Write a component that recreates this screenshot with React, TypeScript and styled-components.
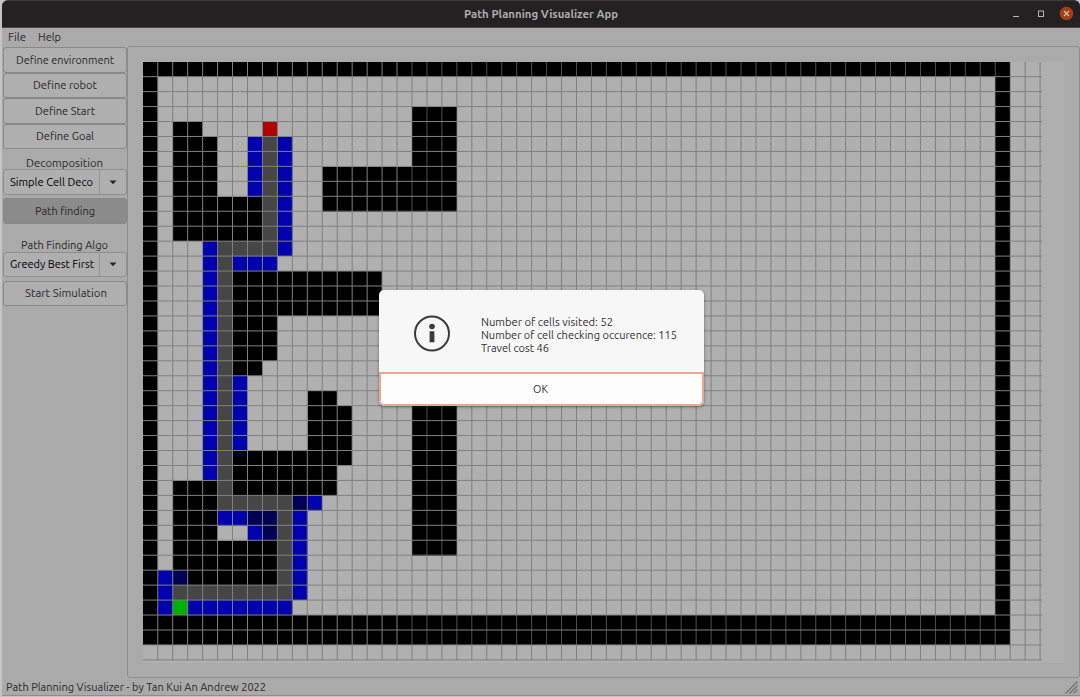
import React, { useLayoutEffect, useRef, useState } from "react";
import styled, { createGlobalStyle } from "styled-components";

const GlobalStyle = createGlobalStyle`
  * { box-sizing: border-box; }
  body { margin: 0; background: #c9c9c9; overflow: hidden; }
`;

const font = `Ubuntu, "Noto Sans", "Open Sans", sans-serif`;

const Window = styled.div`
  position: relative;
  width: 1080px;
  height: 697px;
  display: flex;
  flex-direction: column;
  padding: 0 0 1px 2px;
  background: #c4c4c4;
  font-family: ${font};
  font-size: 11px;
  color: #282828;
`;

const TitleBar = styled.header`
  flex: none;
  height: 28px;
  display: grid;
  grid-template-columns: 1fr auto 1fr;
  align-items: center;
  background: #242122;
  border-top: 1px solid #393738;
  border-bottom: 1px solid #474546;
  border-radius: 6px 6px 0 0;
`;

const Title = styled.h1`
  grid-column: 2;
  display: flex;
  margin: 0;
  font-size: 11px;
  font-weight: 700;
  color: #adabab;
`;

const Controls = styled.div`
  justify-self: end;
  display: flex;
  padding-right: 4px;
`;

const Body = styled.div`
  flex: 1;
  min-height: 0;
  display: flex;
  flex-direction: column;
  background: #aaaaaa;
`;

const MenuBar = styled.nav`
  flex: none;
  height: 18px;
  display: flex;
  gap: 12px;
  padding: 2px 6px 0;
`;

const Main = styled.main`
  height: 633px;
  display: flex;
`;

const Sidebar = styled.aside`
  flex: none;
  width: 125px;
  display: flex;
  flex-direction: column;
  padding: 1px 0 0 1px;
`;

const Button = styled.button<{ $pressed?: boolean; $top?: number }>`
  flex: none;
  width: 124px;
  height: 25.5px;
  display: flex;
  align-items: center;
  justify-content: center;
  margin: ${(p) => p.$top ?? 0}px 0 0;
  padding: 0.9px 1px 0 0;
  border: 1px solid #898989;
  border-radius: 3px;
  background: ${(p) => (p.$pressed ? "#8b8b8b" : "#afafaf")};
  font: 11px ${font};
  color: #282828;
`;

const Label = styled.div<{ $top: number }>`
  height: 14px;
  display: flex;
  justify-content: center;
  align-items: center;
  margin: ${(p) => p.$top}px 1px 0 0;
  padding-top: 2px;
`;

const Combo = styled.div`
  flex: none;
  width: 124px;
  height: 25.5px;
  display: flex;
  border: 1px solid #8e8e8e;
  border-radius: 3px;
  background: #afafaf;
  color: #000;
`;

const ComboText = styled.div`
  flex: 1;
  min-width: 0;
  display: flex;
  align-items: center;
  margin: 0 5px 0 6px;
  padding-top: 0.5px;
  overflow: hidden;
`;

const ComboArrow = styled.div`
  width: 27px;
  display: grid;
  place-items: center;
  padding-top: 1px;
  border-left: 1px solid #949494;
`;

const Frame = styled.section`
  flex: 1;
  padding: 15px 0 0 15px;
  border: 1px solid #8d8d8d;
  border-radius: 3px;
`;

const StatusBar = styled.footer`
  flex: 1;
  display: flex;
  justify-content: space-between;
  padding: 2px 1px 0 4px;
  border-bottom: 1px solid #8d8d8d;
`;

const Dialog = styled.div`
  position: absolute;
  left: 379px;
  top: 290px;
  width: 324.5px;
  height: 116px;
  display: flex;
  flex-direction: column;
  border-radius: 5px;
  background: #f7f7f7;
  box-shadow: 0 1px 3px rgba(0, 0, 0, 0.45);
  overflow: hidden;
`;

const Message = styled.div`
  flex: 1;
  display: flex;
  padding-left: 34px;
  gap: 30px;
`;

const Lines = styled.div`
  display: flex;
  flex-direction: column;
  padding-top: 26px;
  color: #303030;
`;

const Line = styled.div`
  height: 12.8px;
  display: flex;
  align-items: center;
`;

const OkButton = styled.button`
  flex: none;
  height: 34px;
  display: flex;
  align-items: center;
  justify-content: center;
  padding: 1px 1px 0 0;
  border: 2px solid #eba792;
  border-radius: 0 0 5px 5px;
  background: #fdfdfd;
  font: 11px ${font};
  color: #303030;
`;

const Fit = styled.span<{ $w: number }>`
  flex: none;
  display: block;
  width: ${(p) => p.$w}px;
  height: 15px;
  line-height: 15px;
  white-space: nowrap;
`;

const Inner = styled.span`
  display: inline-block;
  transform-origin: 0 50%;
`;

/* Condenses or widens a label so that it fills its given width. */
const Text = ({ w, children }: { w: number; children: string }) => {
  const ref = useRef<HTMLSpanElement>(null);
  const [scale, setScale] = useState(1);
  useLayoutEffect(() => {
    if (!ref.current) return;
    const natural = parseFloat(getComputedStyle(ref.current).width);
    if (natural) setScale(w / natural);
  }, [w, children]);
  return (
    <Fit $w={w}>
      <Inner ref={ref} style={{ transform: `scaleX(${scale})` }}>{children}</Inner>
    </Fit>
  );
};

type Block = [col: number, row: number, cols: number, rows: number];
const PITCH = 14.955;
const BLACK: Block[] = [
  [0, 0, 58, 1], [0, 0, 1, 39], [57, 0, 1, 39], [0, 37, 58, 2],
  [2, 4, 2, 1], [2, 5, 3, 4], [2, 9, 6, 3],
  [18, 3, 3, 4], [12, 7, 9, 3],
  [6, 14, 10, 3], [6, 17, 3, 3], [6, 20, 2, 1],
  [11, 22, 2, 1], [11, 23, 3, 3], [6, 26, 8, 1], [6, 27, 7, 2],
  [2, 28, 3, 6], [5, 32, 4, 3], [3, 34, 2, 1], [18, 22, 3, 11],
];
const BLUE: Block[] = [
  [7, 5, 1, 4], [9, 5, 1, 8], [4, 12, 1, 16], [6, 13, 3, 1], [6, 21, 1, 5],
  [11, 29, 1, 1], [5, 30, 2, 1], [7, 31, 1, 1], [10, 30, 1, 6],
  [1, 34, 1, 3], [3, 36, 7, 1],
];
const NAVY: Block[] = [[10, 29, 1, 1], [7, 30, 2, 1], [8, 31, 1, 1], [2, 34, 1, 1]];
const PATH: Block[] = [
  [8, 5, 1, 8], [5, 12, 3, 1], [5, 13, 1, 17], [6, 29, 4, 1], [9, 30, 1, 6], [2, 35, 7, 1],
];

const Cells = ({ blocks, fill }: { blocks: Block[]; fill: string }) => (
  <g fill={fill} shapeRendering="crispEdges">
    {blocks.map(([c, r, w, h]) => (
      <rect key={`${c}-${r}-${w}`} x={c * PITCH} y={r * PITCH} width={w * PITCH} height={h * PITCH} />
    ))}
  </g>
);

const range = (n: number) => Array.from({ length: n }, (_, i) => i + 1);

const GridMap = () => (
  <svg width="921" height="601" style={{ display: "block", background: "#b0b0b0" }}>
    <Cells blocks={BLACK} fill="#000" />
    <Cells blocks={BLUE} fill="#0000ae" />
    <Cells blocks={NAVY} fill="#000054" />
    <Cells blocks={PATH} fill="#464646" />
    <Cells blocks={[[8, 4, 1, 1]]} fill="#b00000" />
    <Cells blocks={[[2, 36, 1, 1]]} fill="#00b000" />
    <g strokeWidth="1">
      {range(60).map((i) => (
        <line
          key={`v${i}`}
          x1={i * PITCH - 0.2}
          x2={i * PITCH - 0.2}
          y1="0"
          y2="598.5"
          stroke={i < 18 ? "#808080" : "rgba(110, 110, 110, 0.72)"}
        />
      ))}
      {range(40).map((i) => (
        <line key={`h${i}`} y1={i * PITCH - 0.3} y2={i * PITCH - 0.3} x1="0" x2="899" stroke="#808080" />
      ))}
    </g>
  </svg>
);

const Arrow = () => (
  <svg width="8" height="5" viewBox="0 0 8 5"><path d="M0.5 0.5H7.5L4 4.3Z" fill="#262626" /></svg>
);

export default function App() {
  return (
    <>
      <GlobalStyle />
      <Window>
        <TitleBar>
          <Title><Text w={154}>Path Planning Visualizer App</Text></Title>
          <Controls>
            <svg width="66" height="16" viewBox="0 0 66 16" fill="none">
              <path d="M3 10.5h6" stroke="#b5b3b3" />
              <rect x="28.5" y="5" width="5" height="5.5" stroke="#b5b3b3" />
              <circle cx="56.5" cy="7.5" r="6.8" fill="#a83c16" />
              <path d="M54 5l5 5M59 5l-5 5" stroke="#d5c2ba" strokeWidth="1.1" />
            </svg>
          </Controls>
        </TitleBar>
        <Body>
          <MenuBar>
            <Text w={18}>File</Text>
            <Text w={23}>Help</Text>
          </MenuBar>
          <Main>
            <Sidebar>
              <Button><Text w={98}>Define environment</Text></Button>
              <Button><Text w={64}>Define robot</Text></Button>
              <Button><Text w={60}>Define Start</Text></Button>
              <Button><Text w={58}>Define Goal</Text></Button>
              <Label $top={6}><Text w={77}>Decomposition</Text></Label>
              <Combo>
                <ComboText><Text w={83}>Simple Cell Deco</Text></ComboText>
                <ComboArrow><Arrow /></ComboArrow>
              </Combo>
              <Button $pressed $top={3.5}><Text w={60}>Path finding</Text></Button>
              <Label $top={14}><Text w={87}>Path Finding Algo</Text></Label>
              <Combo>
                <ComboText><Text w={84}>Greedy Best First</Text></ComboText>
                <ComboArrow><Arrow /></ComboArrow>
              </Combo>
              <Button $top={3.5}><Text w={82}>Start Simulation</Text></Button>
            </Sidebar>
            <Frame><GridMap /></Frame>
          </Main>
          <StatusBar>
            <Text w={260}>Path Planning Visualizer - by Tan Kui An Andrew 2022</Text>
            <svg width="14" height="14" viewBox="0 0 14 14">
              <path d="M0.5 13.5L12.5 1.5M4.5 13.5L12.5 5.5M8.5 13.5L12.5 9.5" stroke="#6f6f6f" strokeWidth="1.2" />
            </svg>
          </StatusBar>
        </Body>
        <Dialog role="dialog">
          <Message>
            <svg width="38" height="38" viewBox="0 0 38 38" style={{ marginTop: 25 }}>
              <circle cx="19" cy="18.5" r="17" fill="none" stroke="#3b3b3b" strokeWidth="2" />
              <circle cx="19" cy="11.5" r="2.8" fill="#3b3b3b" />
              <path d="M16.6 16.2h4.8v11h-4.8z" fill="#3b3b3b" />
            </svg>
            <Lines>
              <Line><Text w={132}>Number of cells visited: 52</Text></Line>
              <Line><Text w={196}>Number of cell checking occurence: 115</Text></Line>
              <Line><Text w={68}>Travel cost 46</Text></Line>
            </Lines>
          </Message>
          <OkButton><Text w={15}>OK</Text></OkButton>
        </Dialog>
      </Window>
    </>
  );
}
